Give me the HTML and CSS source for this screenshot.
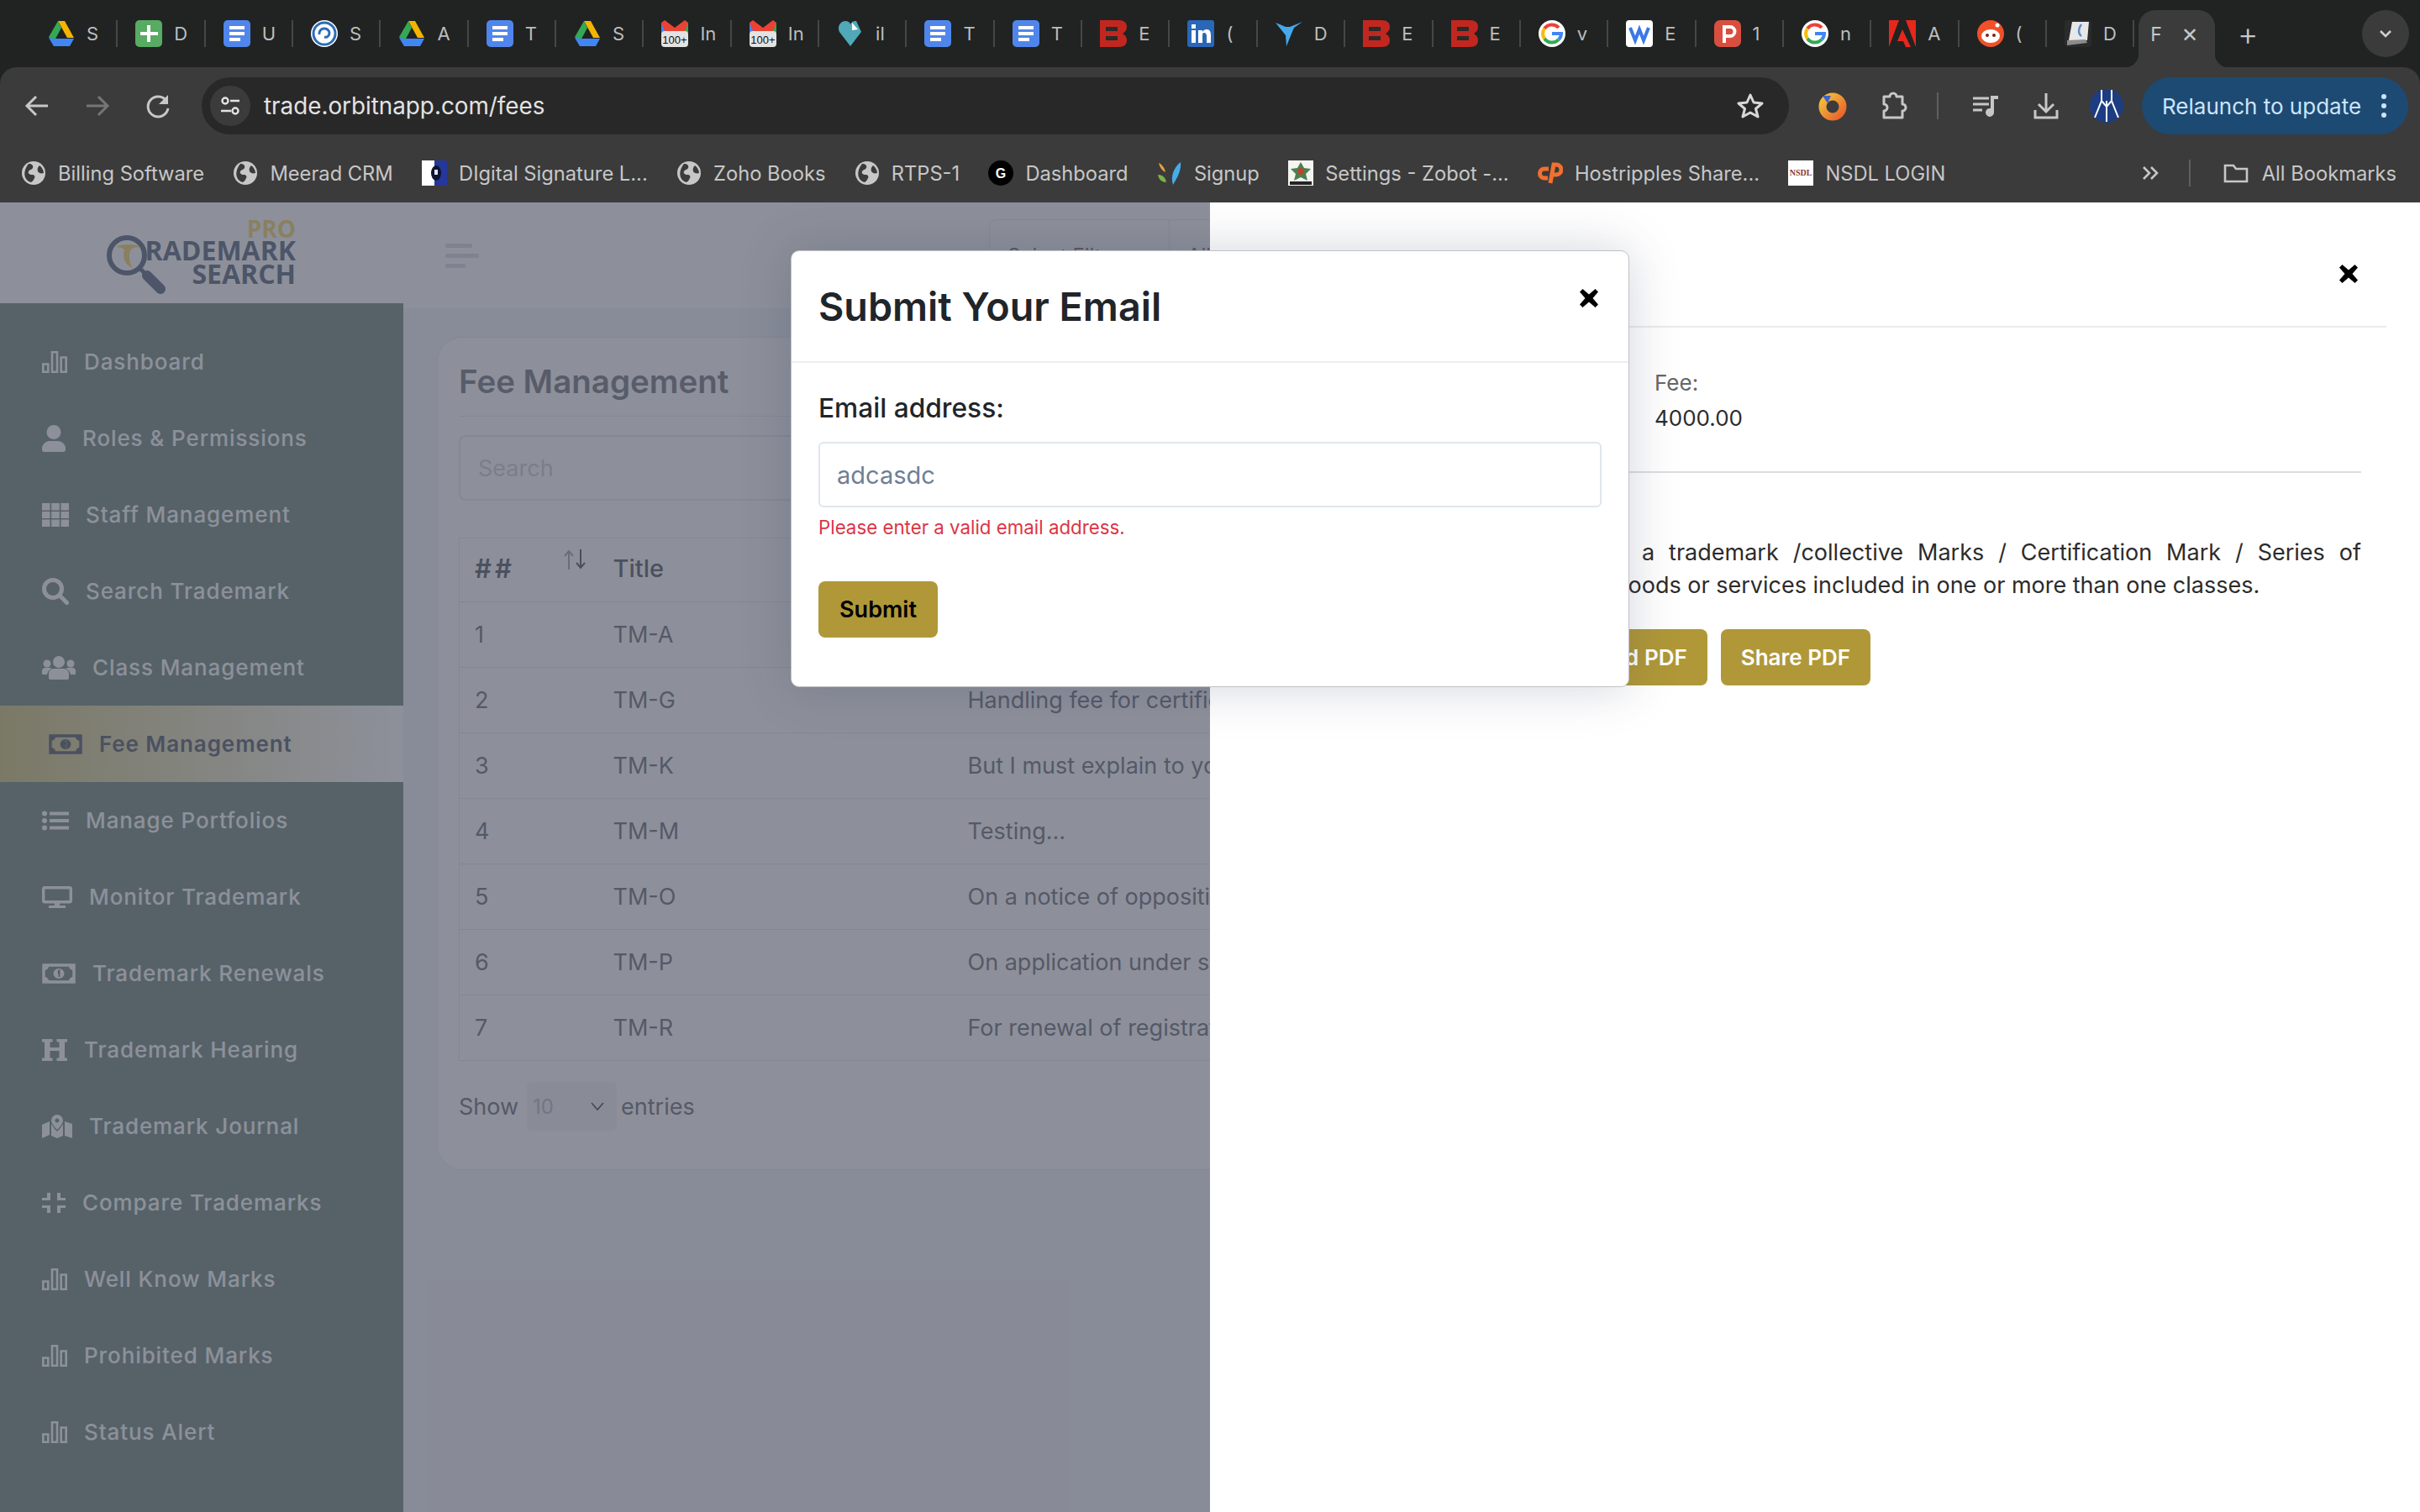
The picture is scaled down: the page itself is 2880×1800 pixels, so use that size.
FILE: index.html
```html
<!DOCTYPE html>
<html lang="en">
<head>
  <meta charset="UTF-8" />
  <title>Fee Management</title>
  <link rel="stylesheet" href="styles.css">
</head>
<body>
  <!-- shared icons -->
  <svg class="icon-defs" aria-hidden="true">
    <symbol id="t-drive" viewBox="0 0 32 32">
      <path fill="#f4b400" d="M12 1h8l11 20h-8z"/>
      <path fill="#34a853" d="M12 1l4 8L7 26l-6-6z"/>
      <path fill="#4285f4" d="M7 22h24l-5 9H7l-6-10z"/>
    </symbol>
    <symbol id="t-docs" viewBox="0 0 32 32">
      <rect x="0" y="0" width="32" height="32" rx="5" fill="#5086ec"/>
      <path fill="#fff" d="M7 7h18v4H7zM7 14h18v4H7zM7 21h13v4H7z"/>
    </symbol>
    <symbol id="t-sheets" viewBox="0 0 32 32">
      <rect width="32" height="32" rx="5" fill="#57ab62"/>
      <path fill="#fff" d="M14 6h4v8h9v4h-9v8h-4v-8H6v-4h8z"/>
    </symbol>
    <symbol id="t-spiral" viewBox="0 0 32 32">
      <circle cx="16" cy="16" r="16" fill="#fff"/>
      <g fill="none" stroke="#2b6cb8" stroke-width="3">
        <circle cx="16" cy="16" r="13"/>
        <path d="M10 17a6 6 0 0 1 12-2c0 4-3 6-6 5"/>
      </g>
    </symbol>
    <symbol id="t-gmail" viewBox="0 0 32 32">
      <path fill="#4285f4" d="M0 3l7 4v9H0z"/>
      <path fill="#34a853" d="M32 3l-7 4v9h7z"/>
      <path fill="#ea4335" d="M0 3l4-3 12 9 12-9 4 3-4 10-12 5-12-5z"/>
      <rect y="13" width="32" height="19" rx="4" fill="#e3e3e3"/>
      <text x="16" y="28" class="tab-count">100+</text>
    </symbol>
    <symbol id="t-heart" viewBox="0 0 32 32">
      <path fill="#4fa9b8" d="M16 31L3 14C0 8 4 1 10 1c3 0 5 1 6 4 1-3 4-4 7-4l6 13z"/>
      <path fill="#fff" d="M18 3l7 8-7 1z"/>
    </symbol>
    <symbol id="t-b" viewBox="0 0 32 32">
      <path fill="#c1271f" d="M0 0h22c7 0 10 3 10 8 0 4-2 6-5 8 3 2 5 4 5 8 0 5-3 8-10 8H0z"/>
      <path fill="#2a2a2a" d="M7 8h14v5H7zM7 19h14v5H7z"/>
    </symbol>
    <symbol id="t-linkedin" viewBox="0 0 32 32">
      <rect width="32" height="32" rx="3" fill="#2a67b8"/>
      <path fill="#fff" d="M5 12h5v15H5zM5 5h5v5H5zM13 12h5v2c1-2 3-3 5-3 4 0 5 3 5 7v9h-5v-8c0-2-1-4-3-4s-2 2-2 4v8h-5z"/>
    </symbol>
    <symbol id="t-bird" viewBox="0 0 32 32">
      <path fill="#45a9ec" d="M0 3l12 5 5 0L32 2 22 9l-3 7-6 15-1-13z"/>
    </symbol>
    <symbol id="t-google" viewBox="0 0 32 32">
      <circle cx="16" cy="16" r="16" fill="#fff"/>
      <path fill="none" stroke="#ea4335" stroke-width="4" d="M24 9A11 11 0 0 0 7 10"/>
      <path fill="none" stroke="#fbbc05" stroke-width="4" d="M7 10a11 11 0 0 0 0 12"/>
      <path fill="none" stroke="#34a853" stroke-width="4" d="M7 22a11 11 0 0 0 17 1"/>
      <path fill="none" stroke="#4285f4" stroke-width="4" d="M24 23c2-2 3-4 3-7H16"/>
    </symbol>
    <symbol id="t-word" viewBox="0 0 32 32">
      <rect width="32" height="32" rx="4" fill="#fff"/>
      <path fill="none" stroke="#3a78e8" stroke-width="4" d="M5 9l6 15 5-13 5 13 6-15"/>
    </symbol>
    <symbol id="t-p" viewBox="0 0 32 32">
      <rect width="32" height="32" rx="7" fill="#d94f3f"/>
      <path fill="none" stroke="#fff" stroke-width="4" d="M12 27V8h7a5 5 0 0 1 0 11h-5"/>
    </symbol>
    <symbol id="t-adobe" viewBox="0 0 32 32">
      <path fill="#e5281c" d="M0 0h12L0 32zM20 0h12v32zM16 11l10 21h-6l-3-7h-7z"/>
    </symbol>
    <symbol id="t-reddit" viewBox="0 0 32 32">
      <circle cx="16" cy="16" r="16" fill="#f0502a"/>
      <ellipse cx="16" cy="19" rx="11" ry="8" fill="#fff"/>
      <circle cx="12" cy="18" r="2" fill="#7a2410"/>
      <circle cx="20" cy="18" r="2" fill="#7a2410"/>
      <circle cx="24" cy="6" r="2.5" fill="#fff"/>
    </symbol>
    <symbol id="t-paper" viewBox="0 0 32 32">
      <rect width="32" height="32" rx="4" fill="#2b2b2b"/>
      <path fill="#e8e8e8" d="M9 2h20l-2 22H5z"/>
      <path fill="none" stroke="#5b8ec7" stroke-width="2.5" d="M20 5c-4 5-4 11 0 14"/>
      <path fill="#8c8c8c" d="M3 24l22-1 2 4-24 3z"/>
    </symbol>
    <symbol id="globe" viewBox="0 0 30 30">
      <circle cx="15" cy="15" r="14" fill="#c7c7c7"/>
      <path fill="#3b3b3b" d="M9 4c4 0 6 2 5 5-1 2-4 2-5 4s1 4 4 4 4 2 3 4-2 4-4 5C4 24 1 14 9 4zM22 6c3 2 5 6 5 9-3 1-6 0-7-2-1-3 0-5 2-7z"/>
    </symbol>

    <symbol id="i-bars" viewBox="0 0 30 26">
      <path fill="none" stroke="currentColor" stroke-width="2.6" d="M1.3 15.5h6v9.2h-6zM12 1.3h6v23.4h-6zM22.7 7.5h6v17.2h-6z"/>
    </symbol>
    <symbol id="i-user" viewBox="0 0 28 32">
      <circle cx="14" cy="8.5" r="8.5" fill="currentColor"/>
      <path fill="currentColor" d="M9 19h10a9 9 0 0 1 9 9v1a3 3 0 0 1-3 3H3a3 3 0 0 1-3-3v-1a9 9 0 0 1 9-9z"/>
    </symbol>
    <symbol id="i-grid" viewBox="0 0 32 28">
      <path fill="currentColor" d="M0 0h9.5v8.5H0zM11.2 0h9.6v8.5h-9.6zM22.5 0H32v8.5h-9.5zM0 10h9.5v8H0zM11.2 10h9.6v8h-9.6zM22.5 10H32v8h-9.5zM0 19.5h9.5V28H0zM11.2 19.5h9.6V28h-9.6zM22.5 19.5H32V28h-9.5z"/>
    </symbol>
    <symbol id="i-search" viewBox="0 0 32 32">
      <circle cx="13" cy="13" r="10.5" fill="none" stroke="currentColor" stroke-width="5"/>
      <path stroke="currentColor" stroke-width="5" stroke-linecap="round" d="M21 21l8.5 8.5"/>
    </symbol>
    <symbol id="i-users" viewBox="0 0 40 28">
      <circle cx="20" cy="7" r="7" fill="currentColor"/>
      <circle cx="6" cy="9" r="4.5" fill="currentColor"/>
      <circle cx="34" cy="9" r="4.5" fill="currentColor"/>
      <path fill="currentColor" d="M14 15h12a6 6 0 0 1 6 6v5a2 2 0 0 1-2 2H10a2 2 0 0 1-2-2v-5a6 6 0 0 1 6-6zM0 18a4 4 0 0 1 4-4h5c1 0 2 .4 2.600 1A9 9 0 0 0 6 22H1a1 1 0 0 1-1-1zM40 18a4 4 0 0 0-4-4h-5c-1 0-2 .4-2.600 1A9 9 0 0 1 34 22h5a1 1 0 0 0 1-1z"/>
    </symbol>
    <symbol id="i-money" viewBox="0 0 40 24">
      <path fill="none" stroke="currentColor" stroke-width="3.4" d="M2 2h36v20H2z"/>
      <path fill="currentColor" d="M3 3h5a5 5 0 0 1-5 5zM37 3h-5a5 5 0 0 0 5 5zM3 21h5a5 5 0 0 0-5-5zM37 21h-5a5 5 0 0 1 5-5z"/>
      <ellipse cx="20" cy="12" rx="6.500" ry="6" fill="currentColor"/>
      <path stroke="#90a39b" stroke-width="2" d="M19 9l1.500-.5V16"/>
    </symbol>
    <symbol id="i-list" viewBox="0 0 32 24">
      <circle cx="3" cy="3.500" r="3" fill="currentColor"/>
      <circle cx="3" cy="12" r="3" fill="currentColor"/>
      <circle cx="3" cy="20.500" r="3" fill="currentColor"/>
      <path fill="currentColor" d="M9 1.500h23v4H9zM9 10h23v4H9zM9 18.500h23v4H9z"/>
    </symbol>
    <symbol id="i-monitor" viewBox="0 0 36 26">
      <rect x="1.700" y="1.700" width="32.600" height="17" rx="1.500" fill="none" stroke="currentColor" stroke-width="3.400"/>
      <path fill="currentColor" d="M15 19h6v4h-6zM8 23h20v3H8z"/>
    </symbol>
    <symbol id="i-hearing" viewBox="0 0 30 26">
      <path fill="currentColor" d="M0 0h12.500v3.500H9.500V10h11V3.500h-3V0H30v3.500h-3v19h3V26H17.500v-3.500h3v-8.500h-11v8.500h3V26H0v-3.500h3v-19H0z"/>
    </symbol>
    <symbol id="i-map" viewBox="0 0 36 28">
      <path fill="currentColor" d="M0 12l9-4v16l-9 4zM27 8l9 3v17l-9-3zM11 11l4 6 3 3 3-3 4-6v14l-7 3-7-3z"/>
      <path fill="currentColor" fill-rule="evenodd" d="M18 0a7 7 0 0 1 7 7c0 3-4 8-7 11-3-3-7-8-7-11a7 7 0 0 1 7-7zm0 4.500a2.500 2.500 0 1 0 0 5 2.500 2.500 0 0 0 0-5z"/>
    </symbol>
    <symbol id="i-compress" viewBox="0 0 28 24">
      <path fill="currentColor" d="M6 0h4v9H0V6h6zM18 0h4v6h6v3H18zM0 15h10v9H6v-6H0zM18 15h10v3h-6v6h-4z"/>
    </symbol>
    <symbol id="i-times" viewBox="0 0 24 24">
      <path fill="currentColor" d="M4.500 1L12 7.500 19.500 1 23 4.500 16.500 12l6.500 7.500-3.500 3.500L12 16.500 4.500 23 1 19.500 7.500 12 1 4.500z"/>
    </symbol>
  </svg>

  <header class="browser">
    <div class="tabstrip">
      <div class="tab"><svg class="tab-icon"><use href="#t-drive"/></svg><span>S</span></div>
      <div class="tab"><svg class="tab-icon"><use href="#t-sheets"/></svg><span>D</span></div>
      <div class="tab"><svg class="tab-icon"><use href="#t-docs"/></svg><span>U</span></div>
      <div class="tab"><svg class="tab-icon"><use href="#t-spiral"/></svg><span>S</span></div>
      <div class="tab"><svg class="tab-icon"><use href="#t-drive"/></svg><span>A</span></div>
      <div class="tab"><svg class="tab-icon"><use href="#t-docs"/></svg><span>T</span></div>
      <div class="tab"><svg class="tab-icon"><use href="#t-drive"/></svg><span>S</span></div>
      <div class="tab"><svg class="tab-icon"><use href="#t-gmail"/></svg><span>In</span></div>
      <div class="tab"><svg class="tab-icon"><use href="#t-gmail"/></svg><span>In</span></div>
      <div class="tab"><svg class="tab-icon"><use href="#t-heart"/></svg><span>il</span></div>
      <div class="tab"><svg class="tab-icon"><use href="#t-docs"/></svg><span>T</span></div>
      <div class="tab"><svg class="tab-icon"><use href="#t-docs"/></svg><span>T</span></div>
      <div class="tab"><svg class="tab-icon"><use href="#t-b"/></svg><span>E</span></div>
      <div class="tab"><svg class="tab-icon"><use href="#t-linkedin"/></svg><span>(</span></div>
      <div class="tab"><svg class="tab-icon"><use href="#t-bird"/></svg><span>D</span></div>
      <div class="tab"><svg class="tab-icon"><use href="#t-b"/></svg><span>E</span></div>
      <div class="tab"><svg class="tab-icon"><use href="#t-b"/></svg><span>E</span></div>
      <div class="tab"><svg class="tab-icon"><use href="#t-google"/></svg><span>v</span></div>
      <div class="tab"><svg class="tab-icon"><use href="#t-word"/></svg><span>E</span></div>
      <div class="tab"><svg class="tab-icon"><use href="#t-p"/></svg><span>1</span></div>
      <div class="tab"><svg class="tab-icon"><use href="#t-google"/></svg><span>n</span></div>
      <div class="tab"><svg class="tab-icon"><use href="#t-adobe"/></svg><span>A</span></div>
      <div class="tab"><svg class="tab-icon"><use href="#t-reddit"/></svg><span>(</span></div>
      <div class="tab"><svg class="tab-icon"><use href="#t-paper"/></svg><span>D</span></div>
      <div class="tab-active"><span>F</span><span class="tab-close">✕</span></div>
      <div class="tab-new">+</div>
      <div class="tab-search">
        <svg width="20" height="20" viewBox="0 0 20 20"><path fill="none" stroke="#d0d0d0" stroke-width="2.600" d="M4 7l6 6 6-6"/></svg>
      </div>
    </div>

    <div class="toolbar">
      <svg class="tool-icon" viewBox="0 0 40 40"><path fill="none" stroke="#c7c7c7" stroke-width="3" d="M33 20H9M19 9L8 20l11 11"/></svg>
      <svg class="tool-icon" viewBox="0 0 40 40"><path fill="none" stroke="#767676" stroke-width="3" d="M7 20h24M21 9l11 11-11 11"/></svg>
      <svg class="tool-icon" viewBox="0 0 40 40"><path fill="none" stroke="#c7c7c7" stroke-width="3" d="M30 14a12 12 0 1 0 2 9"/><path fill="#c7c7c7" d="M32 7v11H21z"/></svg>

      <div class="addressbar">
        <span class="site-tune">
          <svg width="26" height="26" viewBox="0 0 26 26"><g fill="none" stroke="#e3e3e3" stroke-width="2.400"><circle cx="7" cy="7" r="3.500"/><circle cx="19" cy="19" r="3.500"/><path d="M13 7h11M2 19h12"/></g></svg>
        </span>
        <span class="url">trade.orbitnapp.com/fees</span>
        <svg class="star" width="32" height="32" viewBox="0 0 32 32"><path fill="none" stroke="#d8d8d8" stroke-width="3" stroke-linejoin="round" d="M16 3l4 9 10 1-7.500 6.500L25 29l-9-5-9 5 2.500-9.500L2 13l10-1z"/></svg>
      </div>

      <svg class="tool-icon" viewBox="0 0 40 40">
        <defs><linearGradient id="orb" x1="0" y1="0" x2="1" y2="1"><stop offset="0" stop-color="#f4c23c"/><stop offset="1" stop-color="#e8602c"/></linearGradient></defs>
        <circle cx="20" cy="21" r="12" fill="none" stroke="url(#orb)" stroke-width="9"/>
        <path fill="#3e63c8" d="M8 8l10 0-4 9z"/>
      </svg>
      <svg class="tool-icon" viewBox="0 0 40 40"><path fill="none" stroke="#c7c7c7" stroke-width="3" stroke-linejoin="round" d="M16 9a4 4 0 0 1 8 0h7v9a4 4 0 0 1 0 8v8H9v-8a4 4 0 0 0 0-8V9z"/></svg>
      <span class="tool-sep"></span>
      <svg class="tool-icon" viewBox="0 0 40 40"><path fill="none" stroke="#c7c7c7" stroke-width="3" d="M5 11h19M5 18h19M5 25h11"/><path fill="#c7c7c7" d="M26 8h9v4h-5v16a5 5 0 1 1-4-5z"/></svg>
      <svg class="tool-icon" viewBox="0 0 40 40"><path fill="none" stroke="#c7c7c7" stroke-width="3" d="M20 5v22M11 18l9 9 9-9M7 25v9h26v-9"/></svg>
      <svg class="tool-icon" viewBox="0 0 40 40">
        <circle cx="20" cy="20" r="20" fill="#1d3d82"/>
        <path fill="none" stroke="#fff" stroke-width="2" d="M14 1v13L6 34M26 1v13l8 20M20 14v25M14 14l6 7 6-7"/>
      </svg>
      <div class="relaunch">
        <span>Relaunch to update</span>
        <span class="relaunch-dots"><i></i><i></i><i></i></span>
      </div>
    </div>

    <nav class="bookmarks">
      <a class="bookmark"><svg class="bm-icon"><use href="#globe"/></svg>Billing Software</a>
      <a class="bookmark"><svg class="bm-icon"><use href="#globe"/></svg>Meerad CRM</a>
      <a class="bookmark">
        <svg class="bm-icon" viewBox="0 0 30 30"><rect width="30" height="30" fill="#fff"/><rect x="15" width="15" height="30" fill="#26379b"/><ellipse cx="17" cy="15" rx="6" ry="9" fill="#0c1430"/><rect x="15" y="11" width="4" height="6" fill="#dfe6ff"/></svg>
        DIgital Signature L...</a>
      <a class="bookmark"><svg class="bm-icon"><use href="#globe"/></svg>Zoho Books</a>
      <a class="bookmark"><svg class="bm-icon"><use href="#globe"/></svg>RTPS-1</a>
      <a class="bookmark">
        <svg class="bm-icon" viewBox="0 0 30 30"><circle cx="15" cy="15" r="15" fill="#000"/><text x="15" y="21" class="bm-g">G</text></svg>
        Dashboard</a>
      <a class="bookmark">
        <svg class="bm-icon" viewBox="0 0 30 30"><path fill="#e9a23b" d="M2 3c4 2 7 6 8 11-4-2-7-6-8-11z"/><path fill="#45ade8" d="M28 2c1 9-3 17-9 27-3-9 0-20 9-27z"/><path fill="#7cb342" d="M1 17c5 0 9 3 10 9-5 0-9-3-10-9z"/></svg>
        Signup</a>
      <a class="bookmark">
        <svg class="bm-icon" viewBox="0 0 30 30"><rect width="30" height="30" fill="#f4f4f0"/><path fill="#4b7f52" d="M15 2l4 7 8 1-6 6 2 8-8-4-8 4 2-8-6-6 8-1z"/><circle cx="15" cy="13" r="4" fill="#b5482f"/><rect x="2" y="25" width="26" height="4" fill="#222"/></svg>
        Settings - Zobot -...</a>
      <a class="bookmark">
        <svg class="bm-icon" viewBox="0 0 30 30"><path fill="none" stroke="#f0702f" stroke-width="5" d="M13 10H8a5 5 0 0 0 0 11h4M15 27l4-22h3a6 6 0 0 1 0 12h-3"/></svg>
        Hostripples Share...</a>
      <a class="bookmark">
        <svg class="bm-icon" viewBox="0 0 30 30"><rect width="30" height="30" fill="#fff"/><text x="15" y="18" class="bm-nsdl">NSDL</text></svg>
        NSDL LOGIN</a>
      <span class="bm-more">
        <svg width="24" height="24" viewBox="0 0 24 24"><path fill="none" stroke="#c7c7c7" stroke-width="2.600" d="M4 5l7 7-7 7M13 5l7 7-7 7"/></svg>
      </span>
      <span class="bm-sep"></span>
      <a class="bookmark">
        <svg class="bm-icon" viewBox="0 0 30 30"><path fill="none" stroke="#c7c7c7" stroke-width="2.600" d="M2 6h10l3 4h13v15H2z"/></svg>
        All Bookmarks</a>
    </nav>
  </header>

  <div class="viewport">
    <aside class="sidebar">
      <div class="logo">
        <svg class="logo-lens" viewBox="0 0 72 76">
          <circle cx="24" cy="24" r="21" fill="none" stroke="#7e899b" stroke-width="6"/>
          <path fill="#f6df8c" d="M10 14c8-4 22-4 30 0-5 0-9 1-11 3-3 4-3 14 2 22-9-3-13-12-10-22-3-2-7-3-11-3z"/>
          <path stroke="#7e899b" stroke-width="5" d="M40 40l8 8"/>
          <path stroke="#7e899b" stroke-width="12" stroke-linecap="round" d="M48 48l16 16"/>
        </svg>
        <div class="logo-text">
          <span class="logo-pro">PRO</span>
          <span>RADEMARK</span>
          <span>SEARCH</span>
        </div>
      </div>
      <ul class="menu">
        <li class="menu-item"><svg class="ic-bars"><use href="#i-bars"/></svg>Dashboard</li>
        <li class="menu-item"><svg class="ic-user"><use href="#i-user"/></svg>Roles &amp; Permissions</li>
        <li class="menu-item"><svg class="ic-grid"><use href="#i-grid"/></svg>Staff Management</li>
        <li class="menu-item"><svg class="ic-search"><use href="#i-search"/></svg>Search Trademark</li>
        <li class="menu-item"><svg class="ic-users"><use href="#i-users"/></svg>Class Management</li>
        <li class="menu-item active"><svg class="ic-money"><use href="#i-money"/></svg>Fee Management</li>
        <li class="menu-item"><svg class="ic-list"><use href="#i-list"/></svg>Manage Portfolios</li>
        <li class="menu-item"><svg class="ic-monitor"><use href="#i-monitor"/></svg>Monitor Trademark</li>
        <li class="menu-item"><svg class="ic-money"><use href="#i-money"/></svg>Trademark Renewals</li>
        <li class="menu-item"><svg class="ic-bars"><use href="#i-hearing"/></svg>Trademark Hearing</li>
        <li class="menu-item"><svg class="ic-map"><use href="#i-map"/></svg>Trademark Journal</li>
        <li class="menu-item"><svg class="ic-compress"><use href="#i-compress"/></svg>Compare Trademarks</li>
        <li class="menu-item"><svg class="ic-bars"><use href="#i-bars"/></svg>Well Know Marks</li>
        <li class="menu-item"><svg class="ic-bars"><use href="#i-bars"/></svg>Prohibited Marks</li>
        <li class="menu-item"><svg class="ic-bars"><use href="#i-bars"/></svg>Status Alert</li>
      </ul>
    </aside>

    <main class="main">
      <div class="topbar">
        <div class="hamburger"><i></i><i></i><i></i></div>
        <div class="filter">
          <span class="filter-cell">Select Filter</span>
          <span class="filter-cell">All</span>
        </div>
      </div>
      <section class="card">
        <h2 class="card-title">Fee Management</h2>
        <div class="search-box">Search</div>
        <table class="fee-table">
          <colgroup><col class="col-no"><col class="col-title"><col></colgroup>
          <thead>
            <tr>
              <th><span class="th-no"><b>##</b><svg class="sort" viewBox="0 0 26 24"><path fill="none" stroke="#b9bbc0" stroke-width="2" d="M6 24V3M1 8l5-6 5 6"/><path fill="none" stroke="#7a7c80" stroke-width="2" d="M20 0v21M15 16l5 6 5-6"/></svg></span></th>
              <th>Title</th>
              <th>Description</th>
            </tr>
          </thead>
          <tbody>
            <tr><td>1</td><td>TM-A</td><td>Application for registration</td></tr>
            <tr><td>2</td><td>TM-G</td><td>Handling fee for certificate</td></tr>
            <tr><td>3</td><td>TM-K</td><td>But I must explain to you</td></tr>
            <tr><td>4</td><td>TM-M</td><td>Testing...</td></tr>
            <tr><td>5</td><td>TM-O</td><td>On a notice of opposition</td></tr>
            <tr><td>6</td><td>TM-P</td><td>On application under section</td></tr>
            <tr><td>7</td><td>TM-R</td><td>For renewal of registration</td></tr>
          </tbody>
        </table>
        <div class="entries">
          Show
          <span class="entries-select">10
            <svg width="18" height="12" viewBox="0 0 18 12"><path fill="none" stroke="#6b6e76" stroke-width="1.600" d="M2 2l7 8 7-8"/></svg>
          </span>
          <span class="entries-word">entries</span>
        </div>
      </section>
    </main>

    <div class="backdrop"></div>

    <aside class="detail-panel">
      <div class="panel-head">
        <svg class="close-x"><use href="#i-times"/></svg>
      </div>
      <div class="panel-fee">
        <div class="fee-label">Fee:</div>
        <div class="fee-value">4000.00</div>
      </div>
      <hr class="panel-rule">
      <div class="panel-desc">
        <div class="desc-first">a trademark /collective Marks / Certification Mark / Series of</div>
        <div class="desc-second">goods or services included in one or more than one classes.</div>
      </div>
      <div class="panel-actions">
        <button class="btn-gold">Download PDF</button>
        <button class="btn-gold">Share PDF</button>
      </div>
    </aside>

    <div class="email-modal">
      <div class="modal-head">
        <h3>Submit Your Email</h3>
        <svg class="close-x"><use href="#i-times"/></svg>
      </div>
      <div class="modal-body">
        <label class="modal-label">Email address:</label>
        <input class="modal-input" type="text" value="adcasdc">
        <div class="modal-error">Please enter a valid email address.</div>
        <button class="btn-submit">Submit</button>
      </div>
    </div>
  </div>
</body>
</html>
```

FILE: styles.css
```css
* {
  box-sizing: border-box;
}

body {
  margin: 0;
  width: 2880px;
  height: 1800px;
  overflow: hidden;
  font-family: Inter, "Noto Sans", sans-serif;
  display: flex;
  flex-direction: column;
  background: #202322;
}

.icon-defs {
  display: none;
}

/* browser chrome */
.browser {
  font-family: Inter, Roboto, sans-serif;
  color: #c7c7c7;
  flex: none;
}

.tabstrip {
  height: 80px;
  padding-left: 36px;
  display: flex;
  align-items: center;
  background: #202322;
}

.tab {
  width: 104.35px;
  height: 32px;
  padding-left: 21px;
  display: flex;
  align-items: center;
  gap: 14px;
  border-right: 2px solid #454746;
  flex: none;
  font-size: 22px;
  color: #bdbdbd;
}

.tab-icon {
  width: 32px;
  height: 32px;
  flex: none;
}

.tab-count {
  font-family: "Liberation Sans", sans-serif;
  font-size: 13px;
  text-anchor: middle;
  fill: #111;
}

.tab-active {
  position: relative;
  width: 91px;
  height: 68px;
  margin-top: 12px;
  margin-left: 5px;
  padding: 0 20px 10px 14px;
  background: #3b3b3b;
  border-radius: 20px 20px 0 0;
  display: flex;
  align-items: center;
  justify-content: space-between;
  font-size: 23px;
  flex: none;
}

.tab-active::before,
.tab-active::after {
  content: "";
  position: absolute;
  bottom: 0;
  width: 16px;
  height: 16px;
}

.tab-active::before {
  left: -16px;
  background: radial-gradient(circle at 0 0, #202322 16px, #3b3b3b 16.500px);
}

.tab-active::after {
  right: -16px;
  background: radial-gradient(circle at 100% 0, #202322 16px, #3b3b3b 16.500px);
}

.tab-close {
  font-size: 24px;
}

.tab-new {
  width: 40px;
  margin-left: 19px;
  text-align: center;
  font-size: 38px;
  font-weight: 300;
  flex: none;
}

.tab-search {
  width: 56px;
  height: 56px;
  margin-left: 116px;
  border-radius: 28px;
  background: #3b3b3b;
  display: flex;
  align-items: center;
  justify-content: center;
  flex: none;
}

.toolbar {
  height: 80px;
  padding: 12px 0 0 24px;
  display: flex;
  align-items: center;
  gap: 32px;
  background: #3b3b3b;
  border-radius: 20px 20px 0 0;
}

.tool-icon {
  width: 40px;
  height: 40px;
  flex: none;
}

.addressbar {
  width: 1889px;
  height: 68px;
  padding: 0 30px 0 10px;
  display: flex;
  align-items: center;
  background: #282828;
  border-radius: 34px;
  flex: none;
}

.site-tune {
  width: 48px;
  height: 48px;
  border-radius: 50%;
  background: #3b3b3b;
  display: flex;
  align-items: center;
  justify-content: center;
  flex: none;
}

.url {
  margin-left: 16px;
  font-size: 27.8px;
  color: #e3e3e3;
}

.star {
  margin-left: auto;
}

.tool-sep {
  width: 2px;
  height: 32px;
  margin-right: 4px;
  background: #5f5f5f;
  flex: none;
}

.relaunch {
  width: 317px;
  height: 68px;
  margin-left: -10px;
  padding: 0 26px 0 24px;
  display: flex;
  align-items: center;
  justify-content: space-between;
  background: #1d4a72;
  border-radius: 34px;
  color: #cde4fb;
  font-size: 26px;
  flex: none;
}

.relaunch-dots {
  display: flex;
  flex-direction: column;
  gap: 5px;
}

.relaunch-dots i {
  width: 6px;
  height: 6px;
  border-radius: 50%;
  background: #cde4fb;
}

.bookmarks {
  height: 81px;
  padding: 11px 28px 0 25px;
  display: flex;
  align-items: center;
  gap: 34.3px;
  background: #3b3b3b;
  font-size: 23.7px;
}

.bookmark {
  display: flex;
  align-items: center;
  gap: 14px;
  white-space: nowrap;
}

.bookmark:last-child {
  gap: 16px;
}

.bm-icon {
  width: 30px;
  height: 30px;
  flex: none;
}

.bm-g {
  font-family: "Liberation Sans", sans-serif;
  font-size: 16px;
  font-weight: 700;
  text-anchor: middle;
  fill: #fff;
}

.bm-nsdl {
  font-family: "Liberation Serif", serif;
  font-size: 10px;
  font-weight: 700;
  text-anchor: middle;
  fill: #8a3a3a;
}

.bm-more {
  margin-left: auto;
  display: flex;
}

.bm-sep {
  width: 2px;
  height: 32px;
  margin-right: 4px;
  background: #5f5f5f;
}

/* page under the dialogs */
.viewport {
  position: relative;
  flex: 1;
  display: flex;
  overflow: hidden;
  background: #f5f6fa;
  font-size: 27px;
}

.sidebar {
  width: 480px;
  flex: none;
  background: #90a39b;
  color: #fff;
}

.logo {
  height: 120px;
  background: #fff;
  padding: 19px 0 0 127px;
  display: flex;
  align-items: flex-start;
}

.logo-lens {
  width: 72px;
  height: 76px;
  margin-top: 20px;
  flex: none;
}

.logo-text {
  width: 175px;
  margin-left: -22px;
  display: flex;
  flex-direction: column;
  align-items: flex-end;
  font-family: "Open Sans", sans-serif;
  font-size: 32px;
  font-weight: 700;
  line-height: 28px;
  color: #7e899b;
}

.logo-pro {
  color: #f6df8c;
  font-size: 28px;
  line-height: 24px;
}

.menu {
  list-style: none;
  margin: 0;
  padding: 24px 0 0;
}

.menu-item {
  height: 91px;
  padding-left: 50px;
  display: flex;
  align-items: center;
  gap: 20px;
  font-weight: 500;
  font-size: 26px;
  letter-spacing: 0.9px;
}

.menu-item.active {
  padding-left: 58px;
  background: linear-gradient(90deg, #dad197, #fff);
  color: #7a808c;
  font-weight: 600;
}

.ic-bars { width: 30px; height: 26px; }
.ic-user { width: 28px; height: 32px; }
.ic-grid { width: 32px; height: 28px; }
.ic-search { width: 32px; height: 32px; }
.ic-users { width: 40px; height: 28px; }
.ic-money { width: 40px; height: 24px; }
.ic-list { width: 32px; height: 24px; }
.ic-monitor { width: 36px; height: 26px; }
.ic-map { width: 36px; height: 28px; }
.ic-compress { width: 28px; height: 24px; }

.main {
  flex: 1;
  min-width: 0;
  color: #8e9099;
}

.topbar {
  height: 126px;
  padding-left: 50px;
  display: flex;
  align-items: center;
  background: #fff;
}

.hamburger {
  width: 40px;
  display: flex;
  flex-direction: column;
  gap: 7px;
  flex: none;
}

.hamburger i {
  height: 5px;
  border-radius: 2px;
  background: #e2e3e8;
}

.hamburger i:first-child { width: 32px; }
.hamburger i:last-child { width: 24px; }

.filter {
  height: 84px;
  margin-left: 607px;
  align-self: flex-start;
  margin-top: 20px;
  display: flex;
  border: 1px solid #eceef2;
  border-radius: 8px;
  font-size: 24px;
}

.filter-cell {
  width: 214px;
  padding: 28px 0 0 21px;
  border-right: 1px solid #eceef2;
}

.card {
  width: 2330px;
  height: 992px;
  margin: 34px 0 0 40px;
  padding: 30px 25px 0;
  background: #fff;
  border: 1px solid #eceef2;
  border-radius: 30px;
}

.card-title {
  height: 64px;
  margin: 0;
  border-bottom: 1px solid #eceef2;
  font-size: 38.5px;
  line-height: 44px;
  font-weight: 600;
  color: #94979e;
}

.search-box {
  width: 1400px;
  height: 78px;
  margin-top: 22px;
  padding-left: 21px;
  display: flex;
  align-items: center;
  border: 2px solid #eceef2;
  border-radius: 8px;
  color: #d8dadd;
}

.fee-table {
  width: 2280px;
  margin-top: 44px;
  table-layout: fixed;
  border-collapse: collapse;
}

.col-no { width: 165px; }
.col-title { width: 422px; }

.fee-table th,
.fee-table td {
  padding: 0 18px;
  border: 1px solid #eaecf0;
  border-width: 1px 0;
  text-align: left;
  white-space: nowrap;
}

.fee-table tr > :first-child {
  border-left: 1px solid #eaecf0;
}

.fee-table th {
  height: 76px;
  padding-bottom: 4px;
  font-weight: 500;
  font-size: 29px;
  color: #7b7f88;
}

.fee-table td {
  height: 78px;
  font-size: 27px;
}

.th-no {
  display: flex;
  align-items: center;
}

.th-no b {
  font-weight: 600;
  letter-spacing: 4px;
  font-size: 31px;
}

.sort {
  width: 26px;
  height: 24px;
  margin: -22px 0 0 58px;
  flex: none;
}

.entries {
  margin-top: 25px;
  display: flex;
  align-items: center;
  gap: 10px;
}

.entries-select {
  width: 107px;
  height: 58px;
  padding: 0 14px 0 7px;
  display: flex;
  align-items: center;
  justify-content: space-between;
  background: #f6f6f8;
  border-radius: 6px;
  color: #c8cad2;
  font-size: 24px;
}

.entries-word {
  margin-left: -5px;
}

.backdrop {
  position: absolute;
  inset: 0;
  background: rgba(28, 33, 53, 0.5);
}

/* right offcanvas */
.detail-panel {
  position: absolute;
  top: 0;
  bottom: 0;
  left: 1440px;
  right: 0;
  padding-left: 30px;
  background: #fff;
  color: #2c2c2c;
  font-size: 26px;
}

.panel-head {
  height: 149px;
  margin-right: 40px;
  padding: 73px 33px 0 0;
  display: flex;
  justify-content: flex-end;
  border-bottom: 2px solid #ebebeb;
}

.close-x {
  width: 24px;
  height: 24px;
  color: #000;
  flex: none;
}

.panel-fee {
  padding: 45px 0 0 499px;
  line-height: 42px;
}

.fee-label {
  color: #666;
}

.panel-rule {
  width: 1340px;
  margin: 42px 0 0;
  border: 0;
  border-top: 2px solid #dcdde0;
}

.panel-desc {
  width: 1340px;
  margin-top: 75px;
  line-height: 39px;
  font-size: 27px;
}

.desc-first {
  margin-left: 484px;
  text-align: justify;
  text-align-last: justify;
}

.desc-second {
  margin-left: 451px;
}

.panel-actions {
  width: 756px;
  margin-top: 33px;
  display: flex;
  justify-content: flex-end;
  gap: 16px;
}

.btn-gold {
  height: 67px;
  padding: 0 24px;
  border: 0;
  border-radius: 8px;
  background: #b09838;
  color: #fff;
  font-family: inherit;
  font-size: 26px;
  font-weight: 600;
}

/* email dialog */
.email-modal {
  position: absolute;
  top: 57px;
  left: 941px;
  width: 998px;
  height: 520px;
  background: #fff;
  border: 1px solid #bfc1c6;
  border-radius: 10px;
  box-shadow: 0 0 60px rgba(50, 60, 90, 0.22);
  color: #212529;
}

.modal-head {
  height: 133px;
  padding: 0 17px 0 32px;
  display: flex;
  justify-content: space-between;
  align-items: center;
  border-bottom: 2px solid #eceef2;
}

.modal-head h3 {
  margin: 0;
  font-size: 46.7px;
  font-weight: 600;
}

.modal-head .close-x {
  margin: -20px 18px 0 0;
}

.modal-body {
  padding: 34px 32px 0 32px;
}

.modal-label {
  display: block;
  font-size: 31.7px;
  line-height: 40px;
  font-weight: 500;
}

.modal-input {
  display: block;
  width: 100%;
  height: 78px;
  margin-top: 20px;
  padding: 0 20px;
  border: 2px solid #dfe6ee;
  border-radius: 6px;
  font-family: inherit;
  font-size: 29px;
  color: #6f7f95;
}

.modal-error {
  margin-top: 9px;
  line-height: 30px;
  font-size: 22.3px;
  color: #dc3545;
}

.btn-submit {
  display: block;
  width: 142px;
  height: 67px;
  margin-top: 49px;
  border: 0;
  border-radius: 8px;
  background: #b09838;
  color: #000;
  font-family: inherit;
  font-size: 27px;
  font-weight: 600;
}
```
